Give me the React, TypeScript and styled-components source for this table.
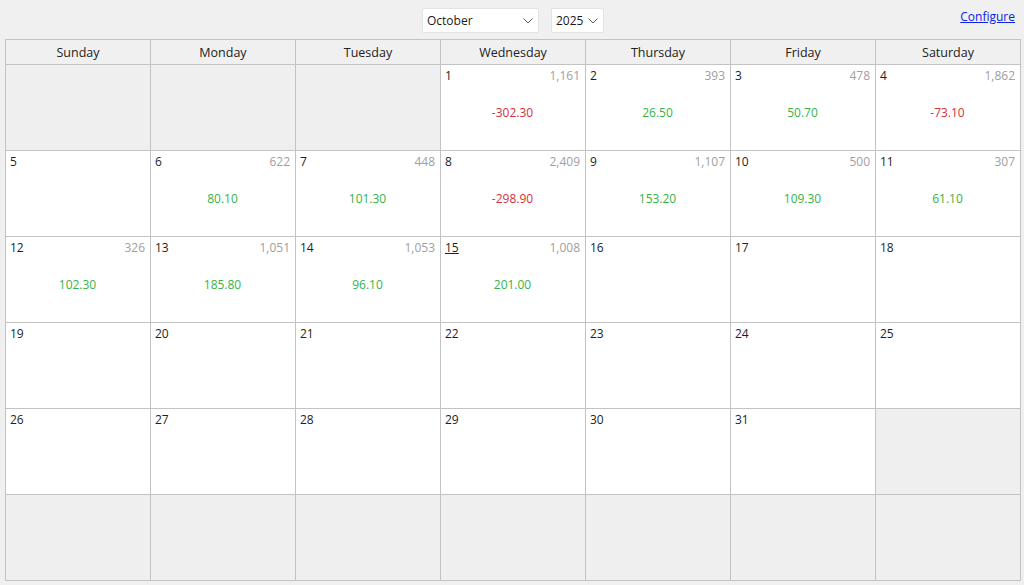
import React from 'react';
import styled, { createGlobalStyle } from 'styled-components';

type Day = { n: number; count?: string; value?: number; today?: boolean };
type Cell = Day | null;

const GlobalStyle = createGlobalStyle`
  html, body {
    margin: 0;
    padding: 0;
    background: #f0f0f0;
    font-family: "Open Sans", "Noto Sans", sans-serif;
    color: #1e1e1e;
  }
`;

const data: Record<number, Day> = {
  1: { n: 1, count: '1,161', value: -302.3 },
  2: { n: 2, count: '393', value: 26.5 },
  3: { n: 3, count: '478', value: 50.7 },
  4: { n: 4, count: '1,862', value: -73.1 },
  6: { n: 6, count: '622', value: 80.1 },
  7: { n: 7, count: '448', value: 101.3 },
  8: { n: 8, count: '2,409', value: -298.9 },
  9: { n: 9, count: '1,107', value: 153.2 },
  10: { n: 10, count: '500', value: 109.3 },
  11: { n: 11, count: '307', value: 61.1 },
  12: { n: 12, count: '326', value: 102.3 },
  13: { n: 13, count: '1,051', value: 185.8 },
  14: { n: 14, count: '1,053', value: 96.1 },
  15: { n: 15, count: '1,008', value: 201.0, today: true },
};

const weekdays = ['Sunday', 'Monday', 'Tuesday', 'Wednesday', 'Thursday', 'Friday', 'Saturday'];

const buildCells = (): Cell[] => {
  const cells: Cell[] = [null, null, null];
  for (let d = 1; d <= 31; d++) cells.push(data[d] || { n: d });
  while (cells.length < 42) cells.push(null);
  return cells;
};

const Chevron = () => (
  <svg width="10" height="6" viewBox="0 0 10 6" fill="none">
    <path d="M0.5 0.5 L5 5 L9.5 0.5" stroke="#5a5a5a" strokeWidth="1" />
  </svg>
);

const App = () => {
  const cells = buildCells();
  return (
    <Page>
      <GlobalStyle />
      <Toolbar>
        <Pickers>
          <Picker width={117}>
            <span>October</span>
            <Chevron />
          </Picker>
          <Picker width={53}>
            <span>2025</span>
            <Chevron />
          </Picker>
        </Pickers>
        <ConfigLink href="#">Configure</ConfigLink>
      </Toolbar>
      <Grid>
        {weekdays.map((w) => (
          <HeaderCell key={w}>{w}</HeaderCell>
        ))}
        {cells.map((c, i) =>
          c ? (
            <DayCell key={i}>
              <CellTop>
                <DayNum today={c.today}>{c.n}</DayNum>
                {c.count && <Count>{c.count}</Count>}
              </CellTop>
              {c.value !== undefined && (
                <Value negative={c.value < 0}>{c.value.toFixed(2)}</Value>
              )}
            </DayCell>
          ) : (
            <EmptyCell key={i} />
          ),
        )}
      </Grid>
    </Page>
  );
};

const Page = styled.div`
  width: 1024px;
  height: 585px;
  display: flex;
  flex-direction: column;
`;

const Toolbar = styled.div`
  position: relative;
  height: 39px;
  display: flex;
  justify-content: center;
  align-items: flex-start;
`;

const Pickers = styled.div`
  display: flex;
  gap: 12px;
  margin-top: 8px;
  margin-left: 2px;
`;

const Picker = styled.div<{ width: number }>`
  width: ${(p) => p.width}px;
  height: 25px;
  box-sizing: border-box;
  background: #ffffff;
  border: 1px solid #e3e3e3;
  border-radius: 2px;
  display: flex;
  align-items: center;
  justify-content: space-between;
  padding: 0 5px 0 4px;
  font-size: 12px;
  color: #1a1a1a;
`;

const ConfigLink = styled.a`
  position: absolute;
  right: 9px;
  top: 8px;
  font-size: 12px;
  color: #0a23e6;
  text-decoration: underline;
`;

const Grid = styled.div`
  margin-left: 5px;
  width: 1016px;
  box-sizing: border-box;
  display: grid;
  grid-template-columns: repeat(7, 144px);
  grid-template-rows: 24px repeat(6, 85px);
  gap: 1px;
  background: #c3c3c3;
  border: 1px solid #c3c3c3;
`;

const HeaderCell = styled.div`
  background: #f0f0f0;
  display: flex;
  align-items: center;
  justify-content: center;
  font-size: 12.5px;
  color: #222;
`;

const EmptyCell = styled.div`
  background: #efefef;
`;

const DayCell = styled.div`
  background: #ffffff;
  display: flex;
  flex-direction: column;
  padding: 3px 5px 0 4px;
`;

const CellTop = styled.div`
  display: flex;
  justify-content: space-between;
  align-items: baseline;
  font-size: 12px;
  line-height: 16px;
`;

const DayNum = styled.span<{ today?: boolean }>`
  color: #1e1e1e;
  text-decoration: ${(p) => (p.today ? 'underline' : 'none')};
`;

const Count = styled.span`
  color: #a0a0a0;
`;

const Value = styled.div<{ negative: boolean }>`
  margin-top: 20px;
  text-align: center;
  font-size: 12px;
  color: ${(p) => (p.negative ? '#d6303c' : '#36b24a')};
`;

export default App;
